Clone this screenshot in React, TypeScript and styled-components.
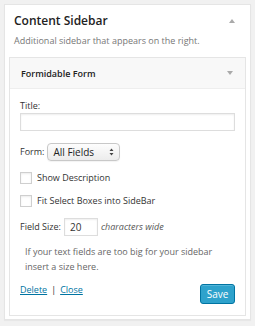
import React from "react";
import styled, { createGlobalStyle } from "styled-components";

const Global = createGlobalStyle`
  html, body { margin: 0; padding: 0; background: #f1f1f1; }
  body { font-family: "Open Sans", "Liberation Sans", sans-serif; color: #444; }
`;

const Page = styled.div`
  padding: 4px;
  width: 255px;
  height: 326px;
  box-sizing: border-box;
`;

const Sidebar = styled.div`
  background: #fff;
  border: 1px solid #e5e5e5;
  box-shadow: 0 1px 1px rgba(0, 0, 0, 0.04);
  padding: 0 4px 3px 4px;
`;

const SidebarHead = styled.div`
  display: flex;
  align-items: center;
  justify-content: space-between;
  padding: 7px 11px 0 5px;
  height: 17px;
`;

const SidebarTitle = styled.h3`
  margin: 0;
  font-size: 12px;
  line-height: 17px;
  font-weight: 600;
  color: #222;
`;

const Arrow = styled.span<{ $down?: boolean }>`
  width: 0;
  height: 0;
  border-left: 3px solid transparent;
  border-right: 3px solid transparent;
  ${(p) =>
    p.$down
      ? "border-top: 4px solid #aaa;"
      : "border-bottom: 4px solid #aaa;"}
`;

const SidebarDesc = styled.p`
  margin: 5px 0 9px 5px;
  font-size: 9px;
  line-height: 14px;
  color: #777;
`;

const Widget = styled.div`
  border: 1px solid #e5e5e5;
  background: #fff;
`;

const WidgetHead = styled.div`
  display: flex;
  align-items: center;
  justify-content: space-between;
  height: 30px;
  padding: 0 12px 0 11px;
  background: #f8f8f8;
  border-bottom: 1px solid #eee;
`;

const WidgetTitle = styled.span`
  font-size: 9px;
  font-weight: 600;
  color: #222;
`;

const WidgetBody = styled.div`
  padding: 10px 10px 11px 10px;
  font-size: 9px;
  line-height: 14px;
  color: #333;
`;

const Label = styled.div``;

const TextInput = styled.div<{ $w?: number }>`
  box-sizing: border-box;
  height: 18px;
  width: ${(p) => (p.$w ? `${p.$w}px` : "100%")};
  border: 1px solid #ddd;
  box-shadow: inset 0 1px 2px rgba(0, 0, 0, 0.07);
  background: #fff;
  font-size: 10px;
  padding: 0 5px;
  line-height: 16px;
  color: #333;
`;

const Row = styled.div<{ $mt?: number; $gap?: number }>`
  display: flex;
  align-items: center;
  gap: ${(p) => p.$gap ?? 3}px;
  margin-top: ${(p) => p.$mt ?? 0}px;
`;

const Select = styled.div`
  box-sizing: border-box;
  width: 73px;
  height: 18px;
  border: 1px solid #c8c8c8;
  border-radius: 4px;
  background: linear-gradient(#fdfdfd, #ececec);
  box-shadow: 0 1px 1px rgba(0, 0, 0, 0.05);
  display: flex;
  align-items: center;
  justify-content: space-between;
  padding: 0 5px 0 5px;
  font-size: 10px;
  color: #222;
`;

const Checkbox = styled.span`
  box-sizing: border-box;
  width: 12px;
  height: 12px;
  border: 1px solid #cfcfcf;
  box-shadow: inset 0 1px 2px rgba(0, 0, 0, 0.08);
  background: #fff;
`;

const Italic = styled.span`
  font-style: italic;
  color: #555;
`;

const Help = styled.p`
  margin: 8px 0 0 5px;
  max-width: 195px;
  color: #666;
  line-height: 15px;
`;

const Footer = styled.div`
  display: flex;
  justify-content: space-between;
  align-items: flex-start;
  margin-top: 10px;
`;

const Links = styled.div`
  display: flex;
  gap: 4px;
  color: #333;
  margin-top: -1px;
`;

const Link = styled.a`
  color: #0074a2;
  text-decoration: underline;
`;

const Button = styled.button`
  box-sizing: border-box;
  height: 20px;
  width: 35px;
  padding: 0;
  font-family: inherit;
  font-size: 10px;
  color: #fff;
  background: #2ea2cc;
  border: 1px solid #0074a2;
  border-radius: 3px;
  box-shadow: inset 0 1px 0 rgba(120, 200, 230, 0.5);
`;

const Spinner = () => (
  <svg width="5" height="8" viewBox="0 0 5 8">
    <path d="M2.5 0.5 L4.5 3 H0.5 Z M2.5 7.5 L4.5 5 H0.5 Z" fill="#444" />
  </svg>
);

export default function App() {
  return (
    <>
      <Global />
      <Page>
        <Sidebar>
          <SidebarHead>
            <SidebarTitle>Content Sidebar</SidebarTitle>
            <Arrow />
          </SidebarHead>
          <SidebarDesc>Additional sidebar that appears on the right.</SidebarDesc>
          <Widget>
            <WidgetHead>
              <WidgetTitle>Formidable Form</WidgetTitle>
              <Arrow $down />
            </WidgetHead>
            <WidgetBody>
              <Label>Title:</Label>
              <TextInput />
              <Row $mt={12}>
                <span>Form:</span>
                <Select>
                  <span>All Fields</span>
                  <Spinner />
                </Select>
              </Row>
              <Row $mt={10} $gap={5}>
                <Checkbox />
                <span>Show Description</span>
              </Row>
              <Row $mt={9} $gap={5}>
                <Checkbox />
                <span>Fit Select Boxes into SideBar</span>
              </Row>
              <Row $mt={10}>
                <span>Field Size:</span>
                <TextInput $w={34}>20</TextInput>
                <Italic>characters wide</Italic>
              </Row>
              <Help>
                If your text fields are too big for your sidebar insert a size here.
              </Help>
              <Footer>
                <Links>
                  <Link>Delete</Link>|<Link>Close</Link>
                </Links>
                <Button>Save</Button>
              </Footer>
            </WidgetBody>
          </Widget>
        </Sidebar>
      </Page>
    </>
  );
}
